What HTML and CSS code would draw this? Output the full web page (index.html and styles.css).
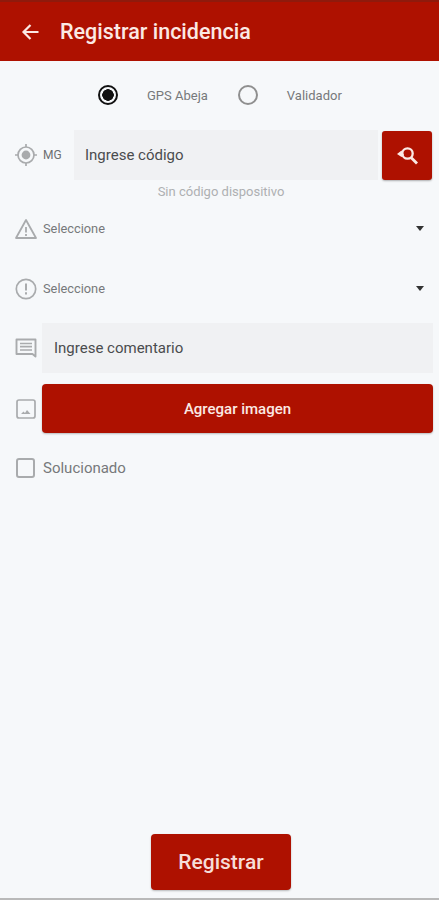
FILE: index.html
```html
<!DOCTYPE html>
<html lang="es">
<head>
<meta charset="UTF-8">
<title>Registrar incidencia</title>
<link rel="stylesheet" href="styles.css">
</head>
<body>
    <header class="topbar">
        <svg class="back-icon" viewBox="0 0 18 18" width="18" height="18">
            <path d="M17.5 9H2.5M9.5 2L2.5 9l7 7" fill="none" stroke="#fbe9e4" stroke-width="2.2"/>
        </svg>
        <span class="title">Registrar incidencia</span>
    </header>

    <main class="form">
        <!-- tipo de dispositivo -->
        <div class="radio-row">
            <span class="radio checked"></span>
            <span class="radio-label first">GPS Abeja</span>
            <span class="radio"></span>
            <span class="radio-label">Validador</span>
        </div>

        <div class="code-row">
            <svg class="icon" viewBox="0 0 24 24" width="24" height="24">
                <circle cx="12" cy="12" r="8" fill="none" stroke="#a9abad" stroke-width="1.7"/>
                <circle cx="12" cy="12" r="4.4" fill="#a9abad"/>
                <path d="M12 1v3M12 20v3M1 12h3M20 12h3" stroke="#a9abad" stroke-width="1.7"/>
            </svg>
            <span class="prefix">MG</span>
            <div class="field code-field">Ingrese código</div>
            <button class="search-btn">
                <svg viewBox="0 0 24 24" width="24" height="24">
                    <circle cx="12.500" cy="10.500" r="5.200" fill="none" stroke="#fbe9e4" stroke-width="2.300"/>
                    <path d="M16 14.500l6 6" stroke="#fbe9e4" stroke-width="2.800"/>
                    <path d="M2 11l4.500-3.400 2.500 4.500-2.500 2z" fill="#fbe9e4"/>
                </svg>
            </button>
        </div>
        <p class="hint">Sin código dispositivo</p>

        <div class="select-row first-select">
            <svg class="icon" viewBox="0 0 24 24" width="24" height="24">
                <path d="M12 3L2 21h20z" fill="none" stroke="#a9abad" stroke-width="1.8" stroke-linejoin="round"/>
                <path d="M12 10v5.500M12 17v2" stroke="#a9abad" stroke-width="1.8"/>
            </svg>
            <span class="select-text">Seleccione</span>
            <span class="caret"></span>
        </div>
        <div class="select-row second-select">
            <svg class="icon" viewBox="0 0 24 24" width="24" height="24">
                <circle cx="12" cy="12" r="9.700" fill="none" stroke="#a9abad" stroke-width="1.700"/>
                <path d="M12 6.500v7M12 15.200v2.200" stroke="#a9abad" stroke-width="2"/>
            </svg>
            <span class="select-text">Seleccione</span>
            <span class="caret"></span>
        </div>

        <div class="comment-row">
            <svg class="icon" viewBox="0 0 24 24" width="24" height="24">
                <path d="M2.500 3.500h19v17l-3-2.500h-16z" fill="none" stroke="#a9abad" stroke-width="1.900" stroke-linejoin="round"/>
                <path d="M6 7.500h12M6 10.700h12M6 14h12" stroke="#a9abad" stroke-width="1.700"/>
            </svg>
            <div class="field comment-field">Ingrese comentario</div>
        </div>

        <div class="image-row">
            <svg class="icon" viewBox="0 0 24 24" width="24" height="24">
                <rect x="3" y="3" width="18" height="18" rx="2" fill="none" stroke="#a9abad" stroke-width="1.700"/>
                <path d="M7 17l2.500-2.500 1.500 1.500 2-3 3.500 4z" fill="#a9abad"/>
            </svg>
            <button class="image-btn">Agregar imagen</button>
        </div>

        <label class="check-row">
            <span class="checkbox"></span>
            <span class="check-label">Solucionado</span>
        </label>
    </main>

    <footer class="actions">
        <button class="submit-btn">Registrar</button>
    </footer>
</body>
</html>
```

FILE: styles.css
```css
* {
    margin: 0;
    padding: 0;
    box-sizing: border-box;
}
html, body {
    width: 100%;
    height: 100%;
}
body {
    display: flex;
    flex-direction: column;
    height: 900px;
    overflow: hidden;
    background-color: #f6f8fa;
    border-bottom: 2px solid #b9b9b9;
    font-family: Roboto, "Liberation Sans", sans-serif;
    color: #555;
}
button {
    border: none;
    font-family: inherit;
}

/* top bar */
.topbar {
    flex: none;
    display: flex;
    align-items: center;
    height: 61px;
    padding: 0 0 0 21px;
    background-color: #ae1100;
    border-top: 2px solid #8f1a0c;
    color: #fbe9e4;
}
.back-icon {
    margin-right: 21px;
}
.title {
    font-size: 21.500px;
    font-weight: 500;
}

/* form */
.form {
    flex: 1;
    display: flex;
    flex-direction: column;
    padding: 0 6px 0 14px;
}
.icon {
    flex: none;
    width: 24px;
    height: 24px;
}
.radio-row {
    display: flex;
    align-items: center;
    height: 24px;
    margin-top: 22px;
    padding-left: 84px;
}
.radio {
    flex: none;
    width: 20px;
    height: 20px;
    border: 2px solid #8f8f8f;
    border-radius: 50%;
}
.radio.checked {
    border: 2.500px solid #111;
    background: radial-gradient(circle, #111 0, #111 5.500px, transparent 6px);
}
.radio-label {
    margin-left: 29px;
    font-size: 13px;
    color: #77797b;
}
.radio-label.first {
    margin-right: 30px;
}
.code-row {
    display: flex;
    align-items: center;
    height: 50px;
    margin-top: 23px;
}
.prefix {
    width: 31px;
    margin-left: 5px;
    font-size: 12px;
    color: #6d6f71;
}
.field {
    display: flex;
    align-items: center;
    background-color: #f0f1f3;
    font-size: 15px;
    color: #4a4c4e;
}
.code-field {
    width: 304px;
    height: 50px;
    padding-left: 11px;
}
.search-btn {
    display: flex;
    align-items: center;
    justify-content: center;
    width: 50px;
    height: 49px;
    margin-left: 4px;
    border-radius: 3px;
    background-color: #ae1100;
    box-shadow: 0 1px 2px rgba(0, 0, 0, 0.3);
}
.hint {
    margin-top: 5px;
    padding-right: 5px;
    text-align: center;
    font-size: 13px;
    line-height: 14px;
    color: #aeb0b2;
}
.select-row {
    display: flex;
    align-items: center;
    height: 24px;
}
.first-select {
    margin-top: 18px;
}
.second-select {
    margin-top: 36px;
}
.select-text {
    flex: 1;
    margin-left: 5px;
    margin-bottom: 2px;
    font-size: 12.800px;
    color: #77797b;
}
.caret {
    margin-right: 9px;
    margin-bottom: 2px;
    border-left: 4.500px solid transparent;
    border-right: 4.500px solid transparent;
    border-top: 5px solid #333;
}
.comment-row {
    display: flex;
    align-items: center;
    margin-top: 22px;
}
.comment-field {
    flex: 1;
    height: 50px;
    margin-left: 4px;
    padding-left: 12px;
}
.image-row {
    display: flex;
    align-items: center;
    margin-top: 11px;
}
.image-btn {
    flex: 1;
    height: 49px;
    margin-left: 4px;
    border-radius: 4px;
    background-color: #ae1100;
    box-shadow: 0 1px 2px rgba(0, 0, 0, 0.25);
    font-size: 15px;
    font-weight: 500;
    color: #fbe9e4;
}
.check-row {
    display: flex;
    align-items: center;
    margin-top: 25px;
}
.checkbox {
    width: 19px;
    height: 20px;
    margin-left: 2px;
    border: 2px solid #a9abad;
    border-radius: 3px;
}
.check-label {
    margin-left: 8px;
    font-size: 15px;
    color: #77797b;
}

/* bottom action */
.actions {
    flex: none;
    display: flex;
    justify-content: center;
    padding: 0 0 8px 3px;
}
.submit-btn {
    width: 140px;
    height: 56px;
    border-radius: 4px;
    background-color: #ae1100;
    box-shadow: 0 1px 2px rgba(0, 0, 0, 0.25);
    font-size: 21px;
    font-weight: 500;
    color: #f6ddd8;
}
```
